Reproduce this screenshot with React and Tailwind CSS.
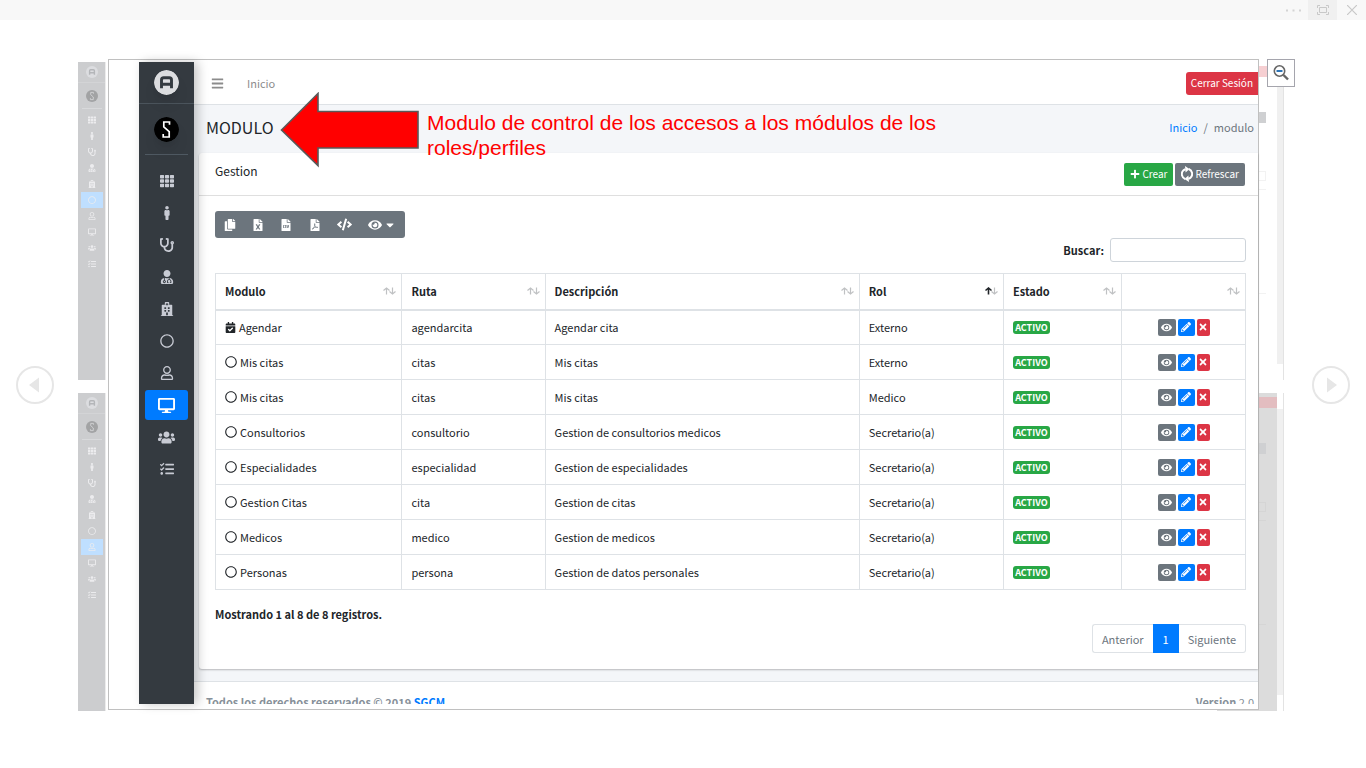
import React from "react";
import {
  FaTh, FaMale, FaStethoscope, FaUserMd, FaHospital, FaRegCircle, FaRegUser, FaDesktop, FaUsers, FaTasks,
  FaCopy, FaFileExcel, FaFileCsv, FaFilePdf, FaCode, FaEye, FaCaretDown, FaPlus, FaCalendarCheck,
  FaPencilAlt, FaTimes, FaBars,
} from "react-icons/fa";

const menu = [
  ["Tablero", FaTh],
  ["Pacientes", FaMale],
  ["Consultas", FaStethoscope],
  ["Medicos", FaUserMd],
  ["Consultorios", FaHospital],
  ["Citas", FaRegCircle],
  ["Personas", FaRegUser],
  ["Modulos", FaDesktop],
  ["Roles", FaUsers],
  ["Tareas", FaTasks],
];

const rows = [
  ["Agendar", "agendarcita", "Agendar cita", "Externo"],
  ["Mis citas", "citas", "Mis citas", "Externo"],
  ["Mis citas", "citas", "Mis citas", "Medico"],
  ["Consultorios", "consultorio", "Gestion de consultorios medicos", "Secretario(a)"],
  ["Especialidades", "especialidad", "Gestion de especialidades", "Secretario(a)"],
  ["Gestion Citas", "cita", "Gestion de citas", "Secretario(a)"],
  ["Medicos", "medico", "Gestion de medicos", "Secretario(a)"],
  ["Personas", "persona", "Gestion de datos personales", "Secretario(a)"],
];

const columns = ["Modulo", "Ruta", "Descripción", "Rol", "Estado", ""];

function LogoA({ className, bar = "#343a40" }) {
  return (
    <svg viewBox="0 0 24 24" className={className} aria-hidden="true">
      <circle cx="12" cy="12" r="12" fill="#dcdde0" />
      <path d="M7.2 17.500V9.5Q7.2 7.4 9.3 7.4H14.7Q16.8 7.4 16.8 9.5V17.500M7.2 13.6H16.8" fill="none" stroke={bar} strokeWidth="2.8" />
    </svg>
  );
}

function LogoS({ className }) {
  return (
    <svg viewBox="0 0 25 25" className={className} aria-hidden="true">
      <circle cx="12.5" cy="12.5" r="12.5" fill="#000" />
      <path d="M15.5 7.8V5H9.8V9.8L15.2 14.6V20H9.2V17" fill="none" stroke="#fff" strokeWidth="1.7" />
    </svg>
  );
}

function SortIcon({ active }) {
  return (
    <svg viewBox="0 0 13 8" className="h-2 w-[13px]" fill="none" stroke="#bfc1c3" strokeWidth="1.2" aria-hidden="true">
      <path d="M9.5 0.5V7M6.500 4.5L9.5 7L12.500 4.5" />
      <path d="M3.5 7.5V1M0.500 3.5L3.5 1L6.500 3.5" stroke={active ? "#212529" : "#bfc1c3"} strokeWidth={active ? 1.6 : 1.2} />
    </svg>
  );
}

function RefreshIcon() {
  return (
    <svg viewBox="0 0 12 16" className="h-4 w-3" fill="none" stroke="currentColor" strokeWidth="2" aria-hidden="true">
      <path d="M4.2 13A5.200 5.200 0 0 1 2.400 4.4L4.500 3.2M7.8 3A5.200 5.200 0 0 1 9.6 11.6L7.500 12.8" />
      <path d="M4 0L8.500 3L4.6 6.500ZM8 16L3.500 13L7.4 9.500Z" fill="currentColor" stroke="none" />
    </svg>
  );
}

function Thumbnail({ active, shaded }) {
  return (
    <div className="flex h-[318px] justify-between">
      <div className="flex w-[28px] flex-col items-center border-r border-[#ececec] bg-[#cccdcf] pt-1 text-[#ececee]">
        <LogoA className="size-3" bar="#b4b6b9" />
        <div className="mt-1 w-full border-t border-[#d3d4d6]" />
        <LogoS className="mt-[7px] size-3 opacity-20" />
        <div className="mt-1.5 mb-[3px] w-5 border-t border-[#d8d9db]" />
        {menu.map(([name, Icon], i) => (
          <div key={name} className={`flex h-4 w-[22px] shrink-0 items-center justify-center ${i === active ? "bg-[#bfdfff]" : ""}`}>
            <Icon className="size-2" />
          </div>
        ))}
      </div>
      <div className="flex">
        <div className={`flex w-[60px] flex-col ${shaded ? "bg-[#dcdcdc]" : "bg-white"}`}>
          <div className={`mt-1 h-[11px] ${shaded ? "bg-[#e3bdc0]" : "bg-[#f6cfd2]"}`} />
          <div className="mt-[35px] mr-[11px] h-[11px] bg-[#cfd0d2]" />
          <div className={`mt-12 mr-[11px] h-[10px] border ${shaded ? "border-[#d5d5d5]" : "border-[#f2f2f2]"}`} />
          <div className={`mt-2 mr-[11px] h-[105px] border-y ${shaded ? "border-[#d5d5d5]" : "border-[#f2f2f2]"}`} />
        </div>
        <div className="w-[7px] border-r border-[#e3e3e3] bg-white py-4">
          <div className="h-full bg-[#f0f0f0]" />
        </div>
      </div>
    </div>
  );
}

function Arrow() {
  return (
    <svg viewBox="0 0 140 76" className="h-[76px] w-[140px]" aria-hidden="true">
      <path d="M1.5 38L38 1.5V19.5H138V56H38V73.5Z" fill="#f00" stroke="#595959" strokeWidth="1.6" />
    </svg>
  );
}

function Sidebar() {
  return (
    <nav aria-label="Principal" className="z-10 flex w-[55px] shrink-0 flex-col items-center bg-[#343a40] text-[#c8cbd4] shadow-[4px_0_10px_rgba(0,0,0,0.22)]">
      <div className="flex h-[42px] w-full shrink-0 items-center justify-center border-b border-[#4b545c]">
        <LogoA className="size-[25px] rounded-full shadow-lg" />
      </div>
      <div className="flex h-[51px] w-[43px] shrink-0 items-center justify-center border-b border-[#4f5962]">
        <LogoS className="size-[25px] rounded-full shadow-lg" />
      </div>
      <ul className="mt-[11px] flex flex-col gap-0.5">
        {menu.map(([name, Icon], i) => (
          <li key={name}>
            <a href="#" aria-label={name} className={`flex h-[30px] w-[43px] items-center justify-center rounded-[3px] ${i === 7 ? "bg-[#007bff] text-white" : ""}`}>
              <Icon className={i === 7 || i === 8 ? "size-[17px]" : "size-[14px]"} />
            </a>
          </li>
        ))}
      </ul>
    </nav>
  );
}

function ModuleTable() {
  return (
    <table className="mt-[11px] w-full table-fixed border-collapse text-left">
      <colgroup>
        <col className="w-[18.1%]" />
        <col className="w-[13.9%]" />
        <col className="w-[30.5%]" />
        <col className="w-[14%]" />
        <col className="w-[11.5%]" />
        <col className="w-[12%]" />
      </colgroup>
      <thead>
        <tr className="h-9">
          {columns.map((c, i) => (
            <th key={i} scope="col" className="border border-b-2 border-[#dee2e6] pr-[5px] pl-[9px] font-bold">
              <span className="flex items-center justify-between">
                <span>{c}</span>
                <SortIcon active={c === "Rol"} />
              </span>
            </th>
          ))}
        </tr>
      </thead>
      <tbody>
        {rows.map(([name, path, desc, role], i) => (
          <tr key={i} className="h-[35px]">
            <td className="border border-[#dee2e6] px-[9px]">
              <span className="flex items-center gap-[3px]">
                {i === 0 ? <FaCalendarCheck className="size-[11px]" /> : <FaRegCircle className="size-3" />}
                {name}
              </span>
            </td>
            <td className="border border-[#dee2e6] px-[9px]">{path}</td>
            <td className="border border-[#dee2e6] px-[9px]">{desc}</td>
            <td className="border border-[#dee2e6] px-[9px]">{role}</td>
            <td className="border border-[#dee2e6] px-[9px]">
              <span className="flex h-[13px] w-[37px] items-center justify-center rounded-[3px] bg-[#28a745] text-[9px] leading-[13px] font-bold text-white">ACTIVO</span>
            </td>
            <td className="border border-[#dee2e6]">
              <span className="flex justify-center gap-0.5 text-white">
                <button type="button" aria-label="Ver" className="flex h-[17px] w-[18px] items-center justify-center rounded-[2px] bg-[#6c757d]"><FaEye className="size-[11px]" /></button>
                <button type="button" aria-label="Editar" className="flex h-[17px] w-[17px] items-center justify-center rounded-[2px] bg-[#007bff]"><FaPencilAlt className="size-[10px]" /></button>
                <button type="button" aria-label="Eliminar" className="flex h-[17px] w-[13px] items-center justify-center rounded-[2px] bg-[#dc3545]"><FaTimes className="size-[10px]" /></button>
              </span>
            </td>
          </tr>
        ))}
      </tbody>
    </table>
  );
}

const tools = [
  ["Copiar", FaCopy],
  ["Excel", FaFileExcel],
  ["CSV", FaFileCsv],
  ["PDF", FaFilePdf],
];

function Screen() {
  return (
    <div className="flex">
      <Sidebar />
      <div className="min-w-0 flex-1 bg-[#f4f6f9]">
        <div className="flex h-[43px] items-center border-b border-[#dee2e6] bg-white pl-[17px] text-[#8c8c8c]">
          <button type="button" aria-label="Menú"><FaBars className="size-[13px]" /></button>
          <a href="#" className="ml-[23px]">Inicio</a>
          <button type="button" className="ml-auto h-[23px] rounded-l-[3px] bg-[#dc3545] px-[5px] text-[10px] text-white">Cerrar Sesión</button>
        </div>
        <div className="relative flex h-12 items-center justify-between pr-1 pb-1 pl-3">
          <h1 className="text-[16px]">MODULO</h1>
          <div className="absolute top-[-13px] left-[86px] z-10 flex gap-[7px]">
            <Arrow />
            <p className="mt-[18px] w-[540px] font-['Liberation_Sans',Arial,sans-serif] text-[21px] leading-[25px] text-[#f00]">
              Modulo de control de los accesos a los módulos de los roles/perfiles
            </p>
          </div>
          <div className="flex gap-[6px] text-[#6c757d]">
            <a href="#" className="text-[#007bff]">Inicio</a>
            <span>/</span>
            <span>modulo</span>
          </div>
        </div>
        <section className="ml-[5px] rounded-l-[3px] bg-white shadow-[0_1px_2px_rgba(0,0,0,0.25)]">
          <div className="flex h-[43px] justify-between border-b border-[#dfdfdf] pr-[13px] pl-4">
            <h2 className="mt-2 text-[12px] leading-5">Gestion</h2>
            <div className="flex items-center gap-0.5 text-[10px] text-white">
              <button type="button" className="flex h-[23px] items-center gap-0.5 rounded-[2px] bg-[#28a745] px-[6px]"><FaPlus className="size-[10px]" />Crear</button>
              <button type="button" className="flex h-[23px] items-center gap-0.5 rounded-[2px] bg-[#6c757d] px-[6px]"><RefreshIcon />Refrescar</button>
            </div>
          </div>
          <div className="pt-[15px] pr-3 pb-4 pl-4">
            <div className="flex h-[27px] w-[190px] items-center justify-between rounded-[3px] bg-[#6c757d] px-[9px] text-white">
              {tools.map(([name, Icon]) => (
                <button key={name} type="button" aria-label={name}><Icon className="size-3" /></button>
              ))}
              <button type="button" aria-label="Código"><FaCode className="size-[15px]" /></button>
              <button type="button" aria-label="Columnas" className="flex items-center gap-0.5"><FaEye className="size-[14px]" /><FaCaretDown className="size-3" /></button>
            </div>
            <div className="flex h-6 items-center justify-end gap-[6px]">
              <label htmlFor="buscar" className="font-bold">Buscar:</label>
              <input id="buscar" type="search" className="h-6 w-[136px] rounded-[3px] border border-[#ced4da] bg-white px-2" />
            </div>
            <ModuleTable />
            <p className="mt-4 leading-4 font-bold">Mostrando 1 al 8 de 8 registros.</p>
            <div className="mt-0.5 flex justify-end text-[#6c757d]">
              <button type="button" className="h-[29px] rounded-l-[3px] border border-r-0 border-[#dee2e6] px-[9px]">Anterior</button>
              <button type="button" className="h-[29px] w-[26px] bg-[#007bff] text-white">1</button>
              <button type="button" className="h-[29px] rounded-r-[3px] border border-l-0 border-[#dee2e6] px-[9px]">Siguiente</button>
            </div>
          </div>
        </section>
        <footer className="mt-3 flex h-[23px] justify-between overflow-hidden border-t border-[#dee2e6] bg-white pt-[11px] pr-1 pl-3 leading-[18px] text-[#869099]">
          <strong>Todos los derechos reservados © 2019 <a href="#" className="text-[#007bff]">SGCM</a></strong>
          <span><strong>Version</strong> 2.0</span>
        </footer>
      </div>
    </div>
  );
}

function PageArrow({ label, d }) {
  return (
    <button type="button" aria-label={label} className="shrink-0">
      <svg viewBox="0 0 38 38" className="size-[38px]" aria-hidden="true">
        <circle cx="19" cy="19" r="18" fill="none" stroke="#e6e6e6" strokeWidth="2" />
        <path d={d} fill="#e6e6e6" />
      </svg>
    </button>
  );
}

export default function App() {
  return (
    <div className="min-h-screen bg-white font-['Noto_Sans_CJK_SC',sans-serif] text-[11px] leading-[18px] text-[#212529]">
      <header className="flex h-5 justify-end bg-[#f8f8f8] text-[#c8c8c8]">
        <button type="button" aria-label="Más" className="flex w-[29px] items-center justify-center">
          <svg viewBox="0 0 15 3" className="h-[3px] w-[15px]" fill="#d4d4d4"><path d="M0 0.5h2v2H0zM6.500 0.500h2v2h-2zM13 0.500h2v2h-2z" /></svg>
        </button>
        <button type="button" aria-label="Pantalla completa" className="flex w-[29px] items-center justify-center bg-[#f0f0f0]">
          <svg viewBox="0 0 12 10" className="h-[10px] w-3" fill="none" stroke="currentColor"><path d="M0.500 3V0.500H3M9 0.500H11.500V3M11.500 7V9.500H9M3 9.500H0.500V7M2.500 2.500H9.500V7.500H2.500Z" /></svg>
        </button>
        <button type="button" aria-label="Cerrar" className="flex w-[29px] items-center justify-center">
          <svg viewBox="0 0 10 10" className="size-[10px]" fill="none" stroke="currentColor" strokeWidth="1.200"><path d="M0 0L10 10M10 0L0 10" /></svg>
        </button>
      </header>
      <main className="flex items-center px-4 pt-[39px]">
        <PageArrow label="Anterior" d="M23 11.500V26.500L13 19Z" />
        <div className="relative mr-7 ml-6 grid min-w-0 flex-1">
          <div className="col-start-1 row-start-1 flex flex-col gap-[13px] pt-[3px]" aria-hidden="true">
            <Thumbnail active={5} />
            <Thumbnail active={6} shaded />
          </div>
          <div role="dialog" aria-label="Modulo" className="z-10 col-start-1 row-start-1 mr-[25px] ml-[30px] self-start border border-[#c0c0c0] bg-white pt-0.5 pb-[5px] pl-[30px]">
            <Screen />
          </div>
          <button type="button" aria-label="Alejar" className="absolute top-0 right-[-11px] z-20 flex size-7 items-center justify-center border border-[#a5a5ad] bg-white">
            <svg viewBox="0 0 16 16" className="size-4" fill="none" aria-hidden="true">
              <circle cx="6.500" cy="6" r="5.200" stroke="#666" strokeWidth="1.600" />
              <path d="M10.500 10L15 14.500" stroke="#666" strokeWidth="2.400" />
              <path d="M3.500 6H9.500" stroke="#2e75b6" strokeWidth="2" />
            </svg>
          </button>
        </div>
        <PageArrow label="Siguiente" d="M15 11.500V26.500L25 19Z" />
      </main>
    </div>
  );
}
